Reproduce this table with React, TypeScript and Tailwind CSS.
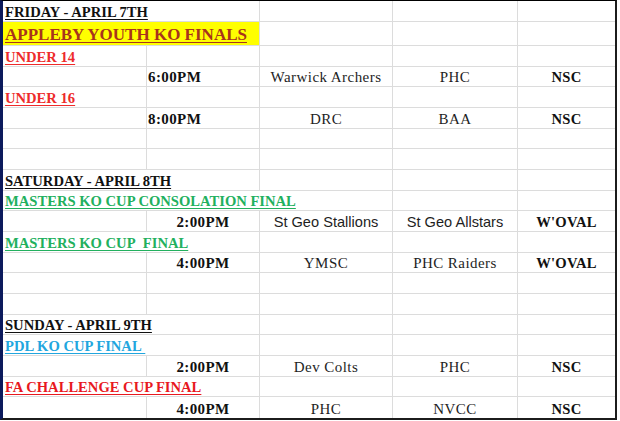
import React from "react";

type Heading = {
  kind: "head";
  text: string;
  color: string;
  span: 1 | 2 | 3;
  big?: boolean;
  bg?: string;
};

type Match = {
  kind: "match";
  time: string;
  left?: boolean;
  home: string;
  away: string;
  venue: string;
  sansHome?: boolean;
  sansAway?: boolean;
};

type Blank = { kind: "blank" };

type Row = Heading | Match | Blank;

const rows: Row[] = [
  { kind: "head", text: "FRIDAY - APRIL 7TH", color: "text-[#111]", span: 2 },
  { kind: "head", text: "APPLEBY YOUTH KO FINALS", color: "text-[#a8341c]", span: 2, big: true, bg: "bg-[#ffff00]" },
  { kind: "head", text: "UNDER 14", color: "text-[#ee2b2b]", span: 1 },
  { kind: "match", time: "6:00PM", left: true, home: "Warwick Archers", away: "PHC", venue: "NSC" },
  { kind: "head", text: "UNDER 16", color: "text-[#ee2b2b]", span: 1 },
  { kind: "match", time: "8:00PM", left: true, home: "DRC", away: "BAA", venue: "NSC" },
  { kind: "blank" },
  { kind: "blank" },
  { kind: "head", text: "SATURDAY - APRIL 8TH", color: "text-[#111]", span: 2 },
  { kind: "head", text: "MASTERS KO CUP CONSOLATION FINAL", color: "text-[#22b05e]", span: 3 },
  { kind: "match", time: "2:00PM", home: "St Geo Stallions", away: "St Geo Allstars", venue: "W'OVAL", sansHome: true, sansAway: true },
  { kind: "head", text: "MASTERS KO CUP\u00a0 FINAL", color: "text-[#22b05e]", span: 2 },
  { kind: "match", time: "4:00PM", home: "YMSC", away: "PHC Raiders", venue: "W'OVAL" },
  { kind: "blank" },
  { kind: "blank" },
  { kind: "head", text: "SUNDAY - APRIL 9TH", color: "text-[#111]", span: 2 },
  { kind: "head", text: "PDL KO CUP FINAL\u00a0", color: "text-[#22a6de]", span: 2 },
  { kind: "match", time: "2:00PM", home: "Dev Colts", away: "PHC", venue: "NSC" },
  { kind: "head", text: "FA CHALLENGE CUP FINAL", color: "text-[#e8191f]", span: 2 },
  { kind: "match", time: "4:00PM", home: "PHC", away: "NVCC", venue: "NSC" },
];

const serif = "font-['Liberation_Serif',serif]";
const sans = "font-['Liberation_Sans',Arial,sans-serif]";
const line = "border-[#dcdcdc]";

const Cell = ({
  children,
  className = "",
  last,
  bottom,
}: {
  children?: React.ReactNode;
  className?: string;
  last?: boolean;
  bottom: boolean;
}) => (
  <div
    className={`flex items-end overflow-visible whitespace-nowrap ${line} ${last ? "" : "border-r"} ${
      bottom ? "border-b" : ""
    } ${className}`}
  >
    {children}
  </div>
);

export default function App() {
  return (
    <div className="w-[620px] h-[421px] bg-white">
      <div className="w-[617px] h-[420px] border-l-[3px] border-l-[#0c1a5c] border-t border-t-black border-r-2 border-r-[#1c1c1c] border-b-2 border-b-[#1c1c1c] overflow-hidden">
        {rows.map((row, i) => {
          const h = i === 0 ? "h-[21px]" : i === 1 ? "h-[24px]" : "h-[20.67px]";
          const bottom = i !== rows.length - 1;
          const grid = `grid grid-cols-[144px_113px_133px_125px_97px] ${h}`;

          if (row.kind === "blank") {
            return (
              <div key={i} className={grid}>
                <Cell bottom={bottom} />
                <Cell bottom={bottom} />
                <Cell bottom={bottom} />
                <Cell bottom={bottom} />
                <Cell bottom={bottom} last />
              </div>
            );
          }

          if (row.kind === "head") {
            const spanCls = row.span === 3 ? "col-span-3" : row.span === 2 ? "col-span-2" : "col-span-1";
            const rest = 5 - row.span;
            return (
              <div key={i} className={grid}>
                <Cell bottom={bottom} className={`${spanCls} pl-[2px] ${row.bg ?? ""}`}>
                  <span
                    className={`${serif} font-bold underline decoration-1 underline-offset-2 ${row.color} ${
                      row.big ? "text-[17px] leading-[20px]" : "text-[14.6px] leading-[18px]"
                    }`}
                  >
                    {row.text}
                  </span>
                </Cell>
                {Array.from({ length: rest }, (_, k) => (
                  <Cell key={k} bottom={bottom} last={k === rest - 1} />
                ))}
              </div>
            );
          }

          const txt = "text-[15px] leading-[18px] tracking-[0.45px] text-[#1e1e1e]";
          const sansTxt = "text-[14.6px] leading-[18px] text-[#1e1e1e]";
          return (
            <div key={i} className={grid}>
              <Cell bottom={bottom} />
              <Cell bottom={bottom} className={row.left ? "justify-start pl-[1px]" : "justify-center"}>
                <span className={`${serif} font-bold text-[15px] leading-[18px] tracking-[0.4px] text-[#111]`}>
                  {row.time}
                </span>
              </Cell>
              <Cell bottom={bottom} className="justify-center">
                <span className={row.sansHome ? `${sans} ${sansTxt}` : `${serif} ${txt}`}>{row.home}</span>
              </Cell>
              <Cell bottom={bottom} className="justify-center">
                <span className={row.sansAway ? `${sans} ${sansTxt}` : `${serif} ${txt}`}>{row.away}</span>
              </Cell>
              <Cell bottom={bottom} last className="justify-center">
                <span className={`${serif} font-bold text-[14.6px] leading-[18px] tracking-[0.3px] text-[#111]`}>
                  {row.venue}
                </span>
              </Cell>
            </div>
          );
        })}
      </div>
    </div>
  );
}
